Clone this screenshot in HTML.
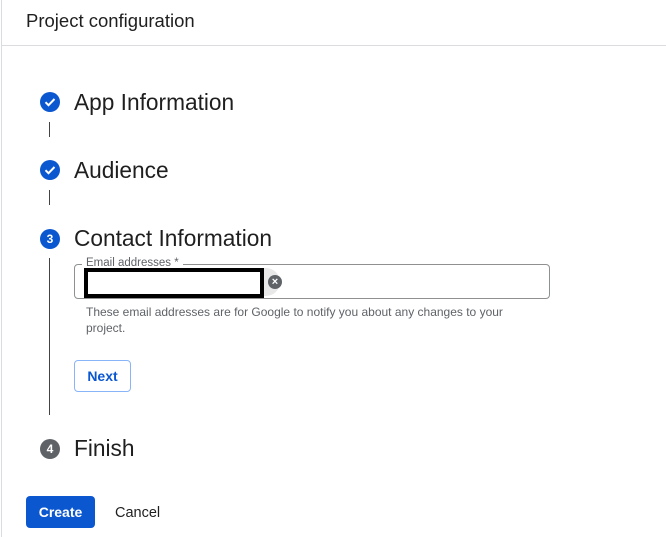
<!DOCTYPE html>
<html><head><style>
*{margin:0;padding:0;box-sizing:border-box}
body{width:666px;height:537px;background:#fff;font-family:"Liberation Sans",Arial,sans-serif;position:relative;overflow:hidden;color:#1f1f1f}
.a{position:absolute}
.ic{position:absolute;left:40px;width:20px;height:20px;border-radius:50%;background:#0b57d0;color:#fff;font-size:12px;font-weight:bold;text-align:center;line-height:20px}
.t{position:absolute;left:74px;font-size:22.7px;line-height:24px;color:#1f1f1f}
.vl{position:absolute;left:49px;width:1px;background:#444}
</style></head><body>
<div class="a" style="left:1px;top:0;width:1px;height:537px;background:#dadce0"></div>
<div class="a" style="left:26px;top:10px;font-size:18.5px;line-height:21px">Project configuration</div>
<div class="a" style="left:2px;top:45px;width:664px;height:1px;background:#dadce0"></div>

<div class="ic" style="top:92px"><svg width="20" height="20" viewBox="0 0 20 20"><path d="M5.5 10.2l3 3 6-6.2" stroke="#fff" stroke-width="2" fill="none"/></svg></div>
<div class="t" style="top:90px">App Information</div>
<div class="vl" style="top:122px;height:15px"></div>

<div class="ic" style="top:160px"><svg width="20" height="20" viewBox="0 0 20 20"><path d="M5.5 10.2l3 3 6-6.2" stroke="#fff" stroke-width="2" fill="none"/></svg></div>
<div class="t" style="top:158px">Audience</div>
<div class="vl" style="top:190px;height:15px"></div>

<div class="ic" style="top:229px">3</div>
<div class="t" style="top:226px">Contact Information</div>
<div class="vl" style="top:258px;height:157px"></div>

<div class="a" style="left:74px;top:264px;width:476px;height:35px;border:1px solid #8e918f;border-radius:4px"></div>
<div class="a" style="left:82px;top:256px;padding:0 4px;background:#fff;font-size:11.5px;color:#5f6368;line-height:14px">Email addresses *</div>
<div class="a" style="left:84px;top:268px;width:196px;height:28px;border-radius:14px;background:#e8e8e8"></div>
<div class="a" style="left:84px;top:268px;width:180px;height:30px;border:4px solid #000;background:#fff"></div>
<div class="a" style="left:268px;top:275px;width:14px;height:14px;border-radius:50%;background:#5f6368;color:#fff;font-size:11px;line-height:14px;text-align:center;font-weight:bold">×</div>
<div class="a" style="left:86px;top:304px;width:440px;font-size:12px;line-height:16px;color:#5f6368">These email addresses are for Google to notify you about any changes to your project.</div>

<div class="a" style="left:74px;top:360px;width:57px;height:32px;border:1px solid #8ab4f8;border-radius:4px;color:#0b57d0;font-size:14px;font-weight:bold;text-align:center;line-height:30px">Next</div>

<div class="ic" style="top:439px;background:#5f6368">4</div>
<div class="t" style="top:436px">Finish</div>

<div class="a" style="left:26px;top:496px;width:69px;height:32px;border-radius:4px;background:#0b57d0;color:#fff;font-size:14px;font-weight:bold;text-align:center;line-height:32px">Create</div>
<div class="a" style="left:115px;top:497px;font-size:14.5px;line-height:32px;color:#1f1f1f">Cancel</div>
</body></html>
